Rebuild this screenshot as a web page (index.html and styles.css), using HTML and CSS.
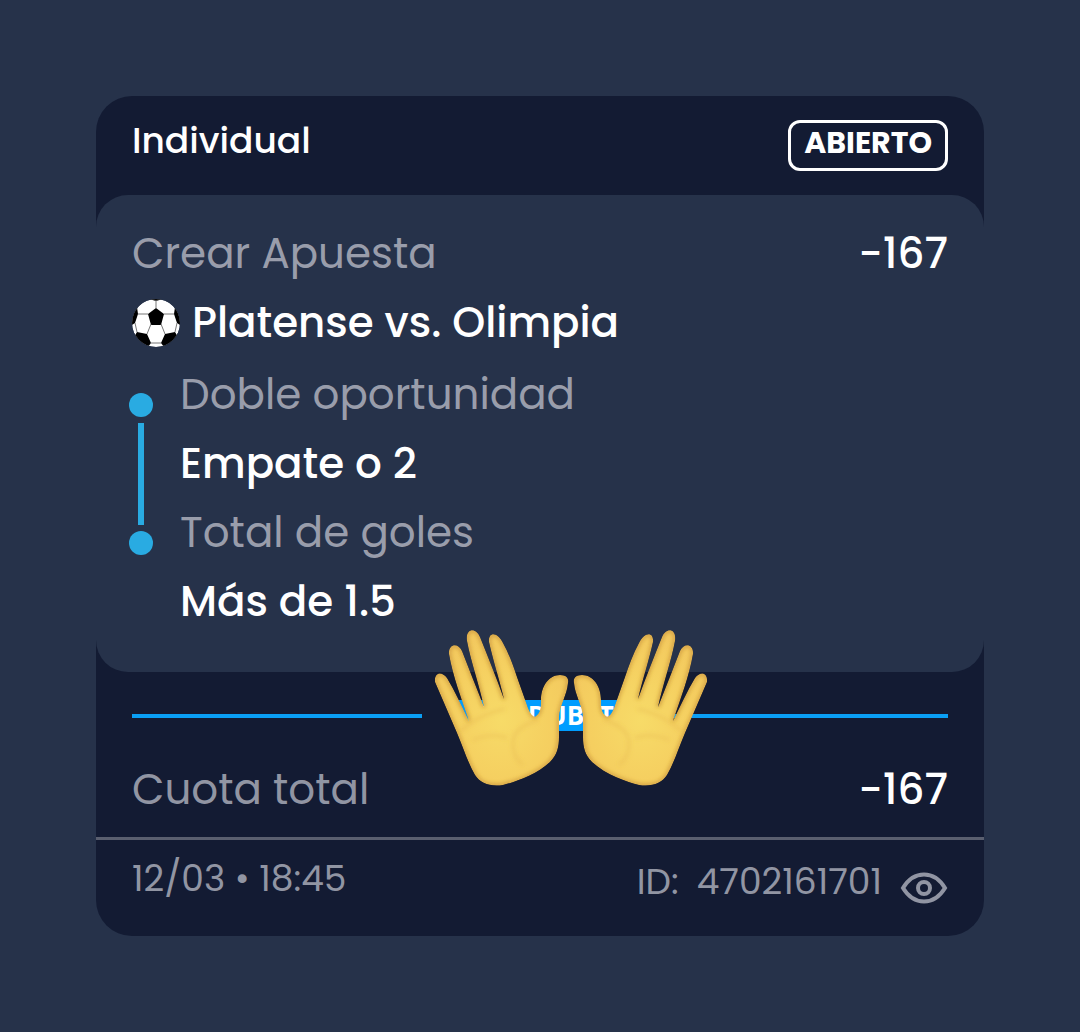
FILE: index.html
```
<!DOCTYPE html>
<html lang="es">
  <head>
    <meta charset="UTF-8" />
    <meta name="viewport" content="width=device-width, initial-scale=1.0" />
    <title>Apuesta</title>
    <link rel="stylesheet" href="styles.css">
  </head>
  <body>
    <main class="ticket">
      <header class="ticket-header">
        <h1>Individual</h1>
        <span class="estado">ABIERTO</span>
      </header>

      <section class="detalle">
        <div class="fila">
          <span class="gris">Crear Apuesta</span>
          <span class="cuota">-167</span>
        </div>
        <h2 class="partido">
          <svg class="balon" viewBox="0 0 48 48" aria-hidden="true">
            <defs>
              <clipPath id="circulo"><circle cx="24" cy="24" r="24" /></clipPath>
            </defs>
            <g clip-path="url(#circulo)">
              <circle cx="24" cy="24" r="24" fill="#fff" />
              <path d="M24 9l8 6-3 11H19l-3-11zM5 33l10 2 4 9-3 4H8L2 38zM43 33l-10 2-4 9 3 4h8l6-10zM0 13l5-5 1 7-3 9-3 2zM48 13l-5-5-1 7 3 9 3 2zM17 0h14l-7 2z" fill="#000" />
              <path d="M24 9V1M16 15l-10 0M32 15h10M19 25l-4 10M29 25l4 10M19 44h10M3 24l2 9M45 24l-2 9" fill="none" stroke="#777" stroke-width="1" />
            </g>
          </svg>
          Platense vs. Olimpia
        </h2>
        <ul class="selecciones">
          <li>
            <p class="gris">Doble oportunidad</p>
            <p class="valor">Empate o 2</p>
          </li>
          <li>
            <p class="gris">Total de goles</p>
            <p class="valor">Más de 1.5</p>
          </li>
        </ul>
      </section>

      <div class="separador">
        <span class="marca">HONDUBET</span>
        <svg class="manos" viewBox="0 0 276 160" aria-hidden="true">
          <defs>
            <radialGradient id="piel" cx="50%" cy="58%" r="65%">
              <stop offset="0" stop-color="#f7db68" />
              <stop offset="0.6" stop-color="#f5cf60" />
              <stop offset="1" stop-color="#f2c75f" />
            </radialGradient>
            <filter id="suave" x="-20%" y="-20%" width="140%" height="140%">
              <feGaussianBlur stdDeviation="2" />
            </filter>
            <path id="silueta" d="M2 50C1 40 9 39 14 46C22 59 28 73 36 89C28 65 20 45 16 22C15 12 25 10 29 19C36 37 43 55 51 75C46 52 38 30 34 9C32-4 43-5 47 5C55 25 63 45 71 67C66 46 60 28 56 10C55-1 65 0 70 11C76 22 80 33 84 45L95 76C98 83 101 86 103 84C107 81 108 77 108 68C108 54 116 43 127 43C134 43 136 47 135 51C134 63 127 73 126 85L126 105C126 115 124 123 117 130C103 143 82 150 70 153C57 155 47 151 42 143C35 131 30 115 24 101z" />
            <clipPath id="recorte"><use href="#silueta" /></clipPath>
            <g id="mano" clip-path="url(#recorte)">
              <use href="#silueta" fill="url(#piel)" />
              <use href="#silueta" fill="none" stroke="#b57a28" stroke-width="3" stroke-opacity="0.7" filter="url(#suave)" />
              <path d="M27 99C39 90 51 81 72 77M40 108C51 103 64 102 74 106M105 88C88 93 79 101 80 113C80 121 84 129 90 133" fill="none" stroke="#dda947" stroke-width="3" stroke-opacity="0.3" filter="url(#suave)" />
            </g>
          </defs>
          <use href="#mano" x="0" y="3" />
          <use href="#mano" transform="translate(276 3) scale(-1 1)" />
        </svg>
      </div>

      <div class="fila total">
        <span class="gris">Cuota total</span>
        <span class="cuota">-167</span>
      </div>

      <footer class="ticket-footer">
        <time datetime="03-12T18:45">12/03 • 18:45</time>
        <div class="codigo">
          <span>ID:</span>
          <span class="numero">4702161701</span>
          <button class="ver" type="button" aria-label="Ver apuesta">
            <svg viewBox="0 0 48 34" aria-hidden="true">
              <path d="M3 16C14-2 34-2 45 16C34 34 14 34 3 16z" />
              <circle cx="24" cy="16" r="6" />
            </svg>
          </button>
        </div>
      </footer>
    </main>
  </body>
</html>
```
FILE: styles.css
```
/* styles.css */
* {
  box-sizing: border-box;
}

body {
  margin: 0;
  padding: 96px;
  background-color: #26324a;
  color: #fff;
  font-family: Poppins, Inter, sans-serif;
  font-size: 42px;
  line-height: 69px;
}

h1,
h2,
p,
ul {
  margin: 0;
  padding: 0;
  font-size: inherit;
  font-weight: 500;
}

.ticket {
  background-color: #131b33;
  border-radius: 36px;
}

.ticket-header {
  display: flex;
  justify-content: space-between;
  align-items: flex-start;
  padding: 24px 36px;
}

.ticket-header h1 {
  font-size: 36px;
  line-height: 42px;
}

.estado {
  padding: 0 13px 6px;
  border: 3px solid #fff;
  border-radius: 12px;
  font-size: 30px;
  font-weight: 700;
  line-height: 39px;
}

.detalle {
  padding: 24px 36px 36px;
  background-color: #26324a;
  border-radius: 32px;
}

.fila {
  display: flex;
  justify-content: space-between;
}

.gris {
  color: #999dab;
  font-weight: 400;
}

.cuota,
.valor {
  font-weight: 500;
}

.partido {
  display: flex;
  align-items: center;
  gap: 12px;
}

.balon {
  width: 48px;
  height: 48px;
}

.selecciones {
  padding-top: 3px;
  list-style: none;
}

.selecciones li {
  position: relative;
  padding-left: 48px;
}

/* punto de cada selección */
.selecciones li::before {
  content: "";
  position: absolute;
  top: 33px;
  left: -3px;
  width: 24px;
  height: 24px;
  border-radius: 50%;
  background-color: #29abe2;
}

/* línea que une los puntos */
.selecciones li:not(:last-child)::after {
  content: "";
  position: absolute;
  top: 63px;
  bottom: -27px;
  left: 6px;
  width: 6px;
  background-color: #29abe2;
}

.separador {
  position: relative;
  display: flex;
  align-items: center;
  gap: 36px;
  margin: 0 36px;
  padding: 28px 0 24px;
}

.separador::before,
.separador::after {
  content: "";
  flex: 1;
  height: 4px;
  background-color: #0a9ff5;
}

.marca {
  padding: 0 8px;
  background-color: #009dff;
  font-family: "Open Sans", sans-serif;
  font-size: 26px;
  font-weight: 700;
  line-height: 31px;
}

/* las manos tapan la marca */
.manos {
  position: absolute;
  top: -43px;
  left: calc(50% - 107px);
  width: 276px;
  height: 160px;
}

.total {
  padding: 0 36px 13px;
  border-bottom: 3px solid #5a5f6f;
}

.total .gris,
.ticket-footer {
  color: #9195a3;
}

.ticket-footer {
  display: flex;
  justify-content: space-between;
  align-items: flex-start;
  padding: 15px 36px 30px;
  font-size: 36px;
  line-height: 48px;
}

.codigo {
  display: flex;
  align-items: flex-end;
  gap: 18px;
  padding-top: 3px;
}

.ver {
  display: flex;
  padding: 0;
  border: none;
  background: none;
  color: inherit;
  cursor: pointer;
}

.ver svg {
  width: 48px;
  height: 34px;
  fill: none;
  stroke: currentColor;
  stroke-width: 4;
}
```
